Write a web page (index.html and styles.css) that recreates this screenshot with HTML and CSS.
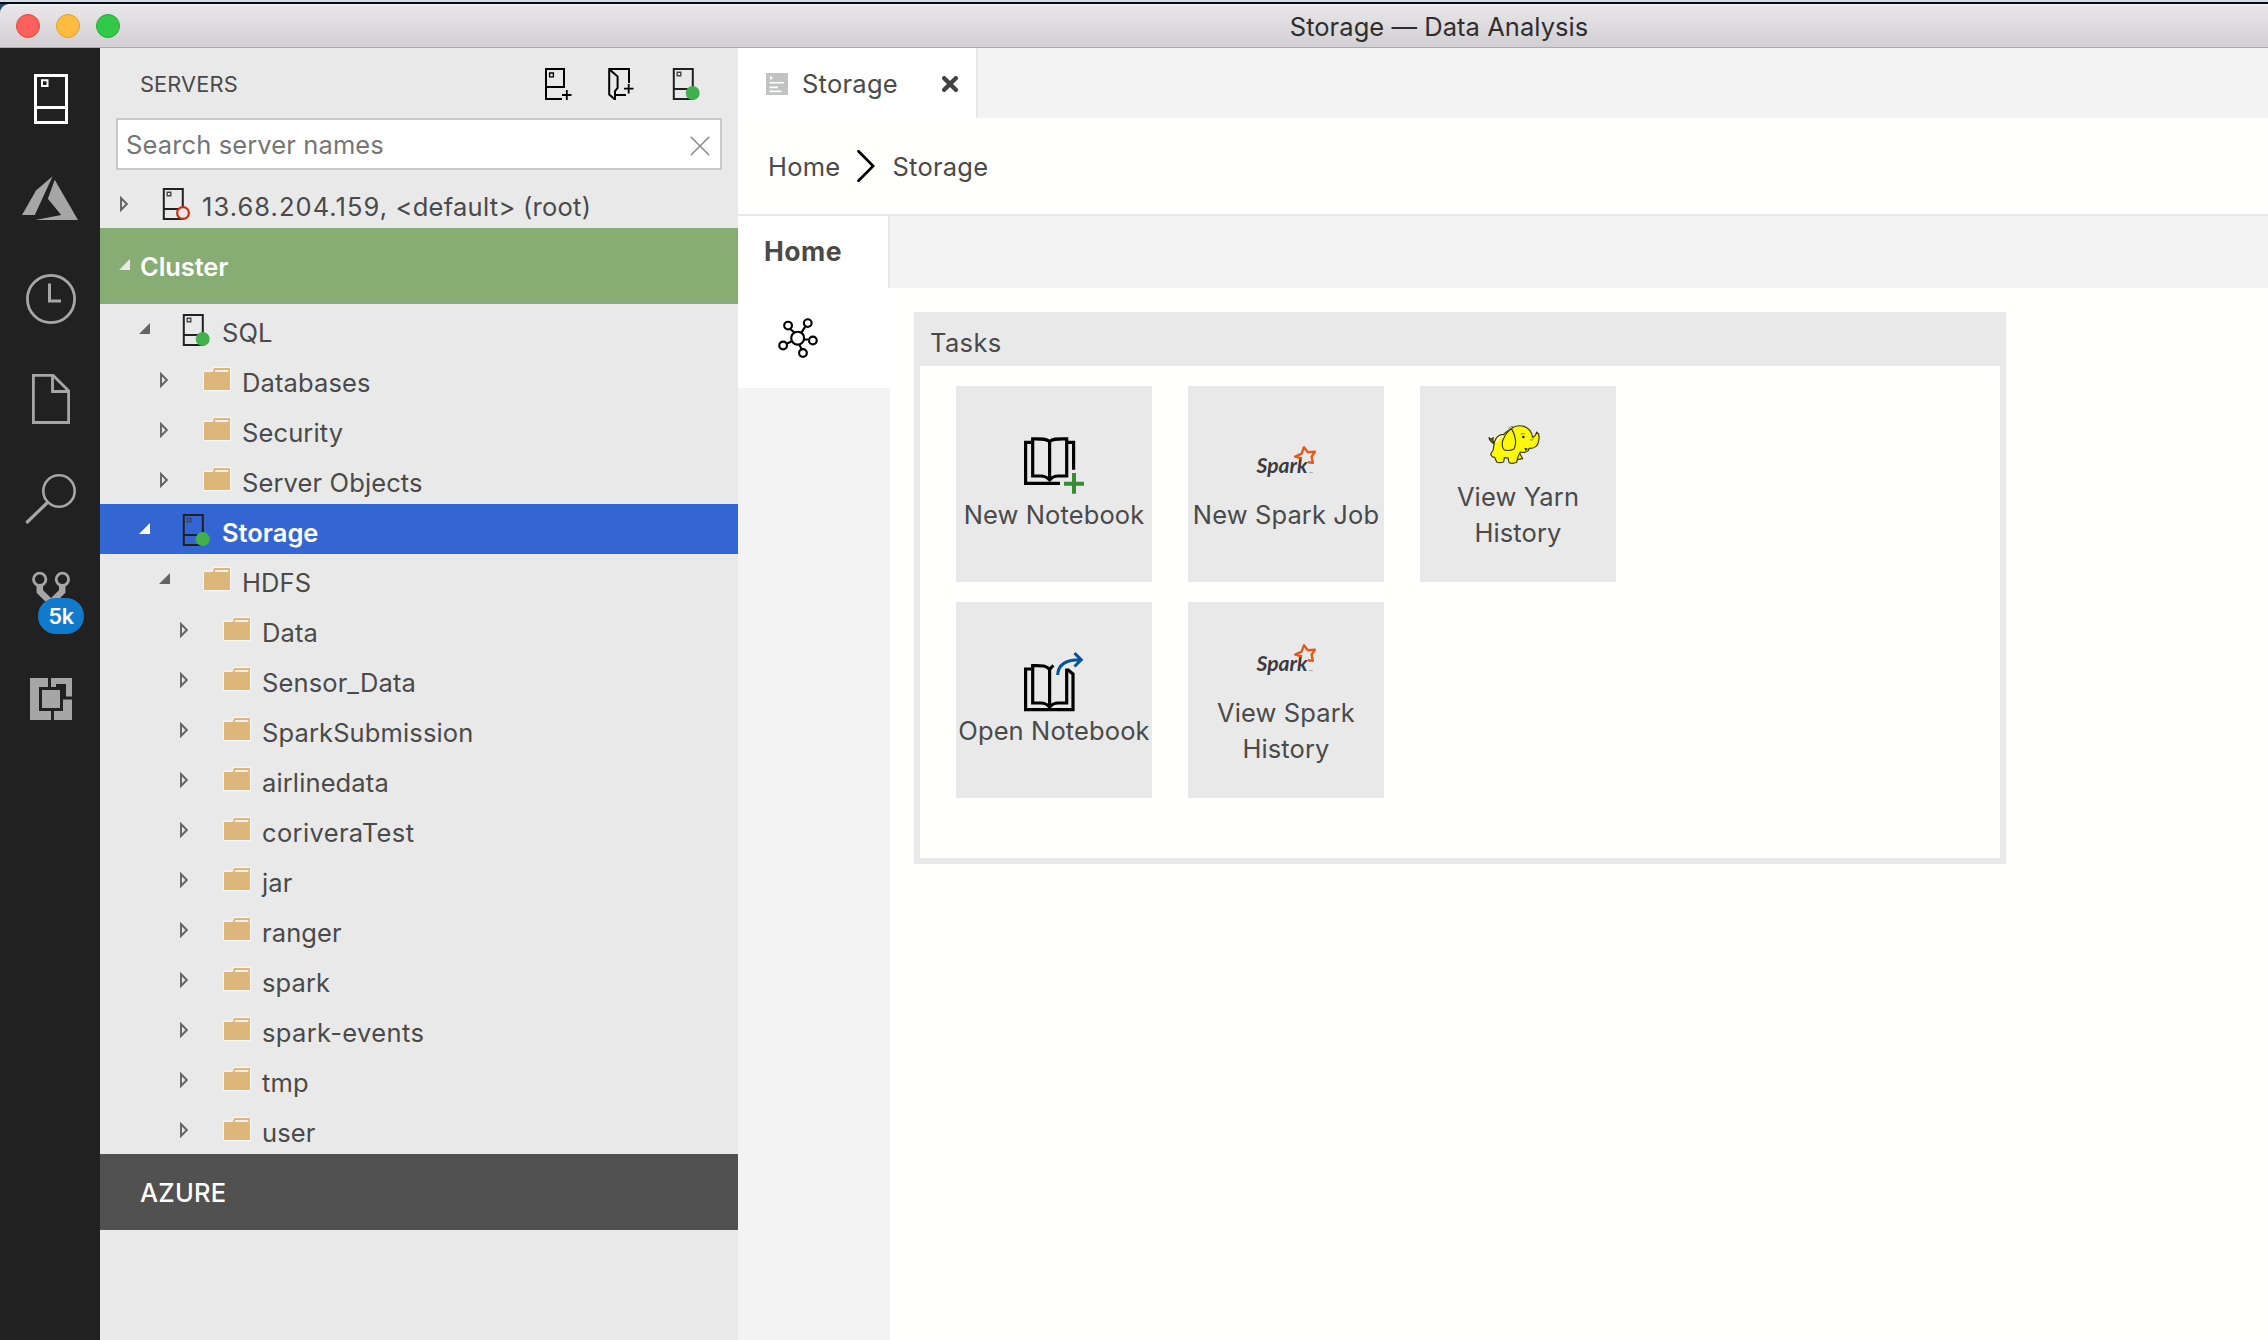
FILE: index.html
```html
<!DOCTYPE html>
<html lang="en">
<head>
<meta charset="utf-8">
<title>Storage — Data Analysis</title>
<link rel="stylesheet" href="styles.css">
</head>
<body>
<svg class="sprite" aria-hidden="true">
  <symbol id="collapsed" viewBox="0 0 8 16"><path d="M1 2V14L6.8 8Z" fill="none" stroke="#646465" stroke-width="1.9"/></symbol>
  <symbol id="expanded" viewBox="0 0 11 11"><path d="M11 0V11H0Z" fill="currentColor"/></symbol>
  <symbol id="server" viewBox="0 0 30 32"><path d="M1.8 1H20.8V31H1.8ZM1.8 21H20.8" fill="none" stroke="#212121" stroke-width="2"/><path d="M5.2 4.2H8.8V7.8H5.2Z" fill="none" stroke="#444" stroke-width="1.4"/></symbol>
  <symbol id="folder" viewBox="0 0 30 26"><path d="M3 4.5H9.5L11.8 .8H27Q29 .8 29 2.8V23.5Q29 25.2 27 25.2H3Q1 25.2 1 23.5V6.5Q1 4.5 3 4.5Z" fill="#f6f6f6"/><path d="M2 6H10.5L12 2H28V24H2Z" fill="#dcb67a"/><path d="M12.6 6L13.4 4H26.3V6Z" fill="#f0eff1"/></symbol>
  <symbol id="spark" viewBox="0 0 60 60"><text x="0.5" y="37" class="spark-word" textLength="51" lengthAdjust="spacingAndGlyphs">Spark</text><path d="M51.8 26.3L56.9 26.9L55.6 20.6L59 15.8L51.8 16.2L48 11.3L45.6 17.6L39.2 20.6L45.6 22.4" fill="none" stroke="#e25a1c" stroke-width="2.4" stroke-linejoin="round"/><path d="M53.3 36.6H54.6M55.3 36.6H56.6" stroke="#777" stroke-width=".8"/></symbol>
</svg>

<header class="titlebar">
  <div class="lights"><i class="light close"></i><i class="light min"></i><i class="light max"></i></div>
  <span class="title">Storage — Data Analysis</span>
</header>

<div class="workbench">
  <nav class="activity">
    <svg viewBox="0 0 100 100"><path d="M35.5 27.5H66.5V74.5H35.5ZM35.5 59.5H66.5" fill="none" stroke="#fff" stroke-width="3"/><path d="M42 32.2H47.5V38H42Z" fill="none" stroke="#fff" stroke-width="2"/></svg>
    <svg viewBox="0 0 100 100"><path d="M52.6 28.3L36 42.6L22 67H34.8Z" fill="#a6a6a6"/><path d="M54.7 31.7L78 72H35.2L61.2 67L47.9 50.8Z" fill="#a6a6a6"/></svg>
    <svg viewBox="0 0 100 100"><circle cx="51" cy="51" r="23.6" fill="none" stroke="#a6a6a6" stroke-width="2.8"/><path d="M49.5 35.5V53H61" fill="none" stroke="#a6a6a6" stroke-width="3"/></svg>
    <svg viewBox="0 0 100 100"><path d="M33.4 27.4H53.2L68.6 42.8V74.5H33.4ZM52.5 27V43.5H68.6" fill="none" stroke="#a6a6a6" stroke-width="2.8"/></svg>
    <svg viewBox="0 0 100 100"><circle cx="59" cy="43" r="15.7" fill="none" stroke="#a6a6a6" stroke-width="2.6"/><path d="M27.3 74L47.5 54.5" stroke="#a6a6a6" stroke-width="3.2" stroke-linecap="round"/></svg>
    <div class="scm">
      <svg viewBox="0 0 100 100"><g fill="none" stroke="#a6a6a6"><path d="M39.8 38V43.5L51 54.5L62.2 43.5V38" stroke-width="6.5"/><g fill="#212121" stroke-width="2.8"><circle cx="39.7" cy="31.3" r="6.2"/><circle cx="62.4" cy="31.3" r="6.2"/></g></g></svg>
      <span class="badge">5k</span>
    </div>
    <svg viewBox="0 0 100 100"><path d="M30 30H72V72H30Z" fill="#a6a6a6"/><path d="M39 39H56V36H66V49H63V63H39Z" fill="#212121"/><path d="M48 30H51V40H48ZM62 51.5V48.5H72V51.5ZM51 62H54V72H51Z" fill="#212121"/><path d="M42 42H60V60H42Z" fill="#a6a6a6"/></svg>
  </nav>

  <aside class="sidebar">
    <div class="side-head">
      <h2>SERVERS</h2>
      <div class="actions">
        <svg viewBox="544 68 30 32"><path d="M562 99H546V69H564V88M546 87H564" fill="none" stroke="#000" stroke-width="2"/><path d="M549.6 73H553.4V76.8H549.6Z" fill="none" stroke="#000" stroke-width="1.3"/><path d="M566.8 90V100M562 95H571.5" stroke="#000" stroke-width="1.8"/></svg>
        <svg viewBox="608 68 30 32"><path d="M629 83V69H609.2V94.5L615 99.5V91L617.6 88V76.5L609.5 69.5M616 95H626" fill="none" stroke="#000" stroke-width="2"/><path d="M628.7 84V93.5M624 88.6H633.5" stroke="#000" stroke-width="1.8"/></svg>
        <svg viewBox="0 0 30 32"><use href="#server"/><circle cx="20.7" cy="25" r="7" fill="#42b04f"/></svg>
      </div>
    </div>
    <div class="search"><span>Search server names</span><svg viewBox="0 0 20 20"><path d="M.7 .7L19.3 19.3M19.3 .7L.7 19.3" stroke="#8e8e8e" stroke-width="1.6"/></svg></div>

    <div class="row l0"><span class="tw"><svg class="c"><use href="#collapsed"/></svg></span><svg class="srv" viewBox="0 0 30 32"><use href="#server"/><circle cx="21" cy="25" r="5.9" fill="#e9e9e9" stroke="#d02e14" stroke-width="2.2"/></svg><span class="label host"><span class="ip">13.68.204.159,</span> &lt;default&gt; (root)</span></div>
    <div class="group cluster"><svg class="e"><use href="#expanded"/></svg><span>Cluster</span></div>
    <div class="row l1"><span class="tw"><svg class="e"><use href="#expanded"/></svg></span><svg class="srv" viewBox="0 0 30 32"><use href="#server"/><circle cx="20.7" cy="25" r="7" fill="#42b04f"/></svg><span class="label">SQL</span></div>
    <div class="row l2"><span class="tw"><svg class="c"><use href="#collapsed"/></svg></span><svg class="fld"><use href="#folder"/></svg><span class="label">Databases</span></div>
    <div class="row l2"><span class="tw"><svg class="c"><use href="#collapsed"/></svg></span><svg class="fld"><use href="#folder"/></svg><span class="label">Security</span></div>
    <div class="row l2"><span class="tw"><svg class="c"><use href="#collapsed"/></svg></span><svg class="fld"><use href="#folder"/></svg><span class="label">Server Objects</span></div>
    <div class="row l1 selected"><span class="tw"><svg class="e"><use href="#expanded"/></svg></span><svg class="srv" viewBox="0 0 30 32"><use href="#server"/><circle cx="20.7" cy="25" r="7" fill="#42b04f"/></svg><span class="label">Storage</span></div>
    <div class="row l2"><span class="tw"><svg class="e"><use href="#expanded"/></svg></span><svg class="fld"><use href="#folder"/></svg><span class="label">HDFS</span></div>
    <div class="row l3"><span class="tw"><svg class="c"><use href="#collapsed"/></svg></span><svg class="fld"><use href="#folder"/></svg><span class="label">Data</span></div>
    <div class="row l3"><span class="tw"><svg class="c"><use href="#collapsed"/></svg></span><svg class="fld"><use href="#folder"/></svg><span class="label">Sensor_Data</span></div>
    <div class="row l3"><span class="tw"><svg class="c"><use href="#collapsed"/></svg></span><svg class="fld"><use href="#folder"/></svg><span class="label">SparkSubmission</span></div>
    <div class="row l3"><span class="tw"><svg class="c"><use href="#collapsed"/></svg></span><svg class="fld"><use href="#folder"/></svg><span class="label">airlinedata</span></div>
    <div class="row l3"><span class="tw"><svg class="c"><use href="#collapsed"/></svg></span><svg class="fld"><use href="#folder"/></svg><span class="label wide">coriveraTest</span></div>
    <div class="row l3"><span class="tw"><svg class="c"><use href="#collapsed"/></svg></span><svg class="fld"><use href="#folder"/></svg><span class="label">jar</span></div>
    <div class="row l3"><span class="tw"><svg class="c"><use href="#collapsed"/></svg></span><svg class="fld"><use href="#folder"/></svg><span class="label">ranger</span></div>
    <div class="row l3"><span class="tw"><svg class="c"><use href="#collapsed"/></svg></span><svg class="fld"><use href="#folder"/></svg><span class="label">spark</span></div>
    <div class="row l3"><span class="tw"><svg class="c"><use href="#collapsed"/></svg></span><svg class="fld"><use href="#folder"/></svg><span class="label wide">spark-events</span></div>
    <div class="row l3"><span class="tw"><svg class="c"><use href="#collapsed"/></svg></span><svg class="fld"><use href="#folder"/></svg><span class="label">tmp</span></div>
    <div class="row l3"><span class="tw"><svg class="c"><use href="#collapsed"/></svg></span><svg class="fld"><use href="#folder"/></svg><span class="label">user</span></div>
    <div class="group azure"><span>AZURE</span></div>
  </aside>

  <main class="editor">
    <div class="tabs">
      <div class="tab">
        <svg class="doc" viewBox="0 0 22 22"><path d="M0 0H22V22H0Z" fill="#c1c3c2"/><path d="M4 3L7 5L4 7ZM3.5 9H18V10.6H3.5ZM3.5 13.6H12V15.2H3.5ZM3.5 17.6H15.5V19.2H3.5Z" fill="#fff"/></svg>
        <span>Storage</span>
        <svg class="x" viewBox="0 0 16 16"><path d="M2.2 2.2L13.8 13.8M13.8 2.2L2.2 13.8" stroke="#424242" stroke-width="4.4" stroke-linecap="round"/></svg>
      </div>
    </div>
    <div class="crumbs"><span>Home</span><svg viewBox="0 0 18 32"><path d="M1.5 1.2L16.2 16L1.5 30.8" fill="none" stroke="#000" stroke-width="2.7" stroke-linecap="round"/></svg><span>Storage</span></div>
    <div class="dash">
      <div class="rail">
        <div class="home">Home</div>
        <div class="railicon"><svg viewBox="114 803 120 121"><g fill="none" stroke="#000" stroke-width="6.5"><path d="M163 847L150 836M184 847L196 829M193 868H207M178 884L185 897M154 874L141 880"/><circle cx="173" cy="864" r="19.5"/><circle cx="144" cy="826" r="11.7"/><circle cx="203.5" cy="818.5" r="11.7"/><circle cx="219" cy="871" r="11.7"/><circle cx="189" cy="909" r="11.7"/><circle cx="129" cy="886" r="11.7"/></g></svg></div>
      </div>
      <div class="pane">
        <div class="strip"></div>
        <section class="tasks">
          <h3>Tasks</h3>
          <div class="tiles">
            <div class="tile"><svg viewBox="0 0 60 60"><g fill="none" stroke="#000" stroke-width="3.2"><path d="M7 6.3H1.6V47.3H36M44 6.3H49.6V33.7"/><path d="M25.6 5.5C22 2.5 17 2.9 8.7 2.9V40H17Q22 40 25.6 44Q29 40 34 40H42.7V2.9C34 2.9 29 2.5 25.6 5.5V44"/></g><path d="M48 37H52V45.7H60V49.7H52V57.7H48V49.7H40V45.7H48Z" fill="#388a34"/></svg><span>New Notebook</span></div>
            <div class="tile"><svg viewBox="0 0 60 60"><use href="#spark"/></svg><span>New Spark Job</span></div>
            <div class="tile"><svg viewBox="594 144 180 180"><g fill="#fcf80c" stroke="#3a380c" stroke-width="3.5" stroke-linejoin="round"><path d="M612 222Q598 212 597 203Q603 211 610 203Q606 213 614 218Z" fill="#77742a"/><path d="M684 240L698 266L682 269L676 258Z"/><path d="M640 194C622 192 611 212 611 230C611 238 610 243 605 247C599 254 606 262 614 262L620 276Q630 280 641 276L643 263L655 264Q654 272 658 278Q668 283 680 277Q682 260 691 246Q706 250 715 242L717 235Q744 238 747 206Q749 192 740 186Q738 198 728 202Q725 178 702 169Q678 163 662 178Q646 186 640 194Z"/><path d="M664 176Q648 186 638 212Q634 230 642 239Q656 245 672 237Q680 220 675 202Q672 188 664 176Z"/></g><path d="M640 199Q626 202 620 216" fill="none" stroke="#fffed0" stroke-width="6"/><path d="M703 233L714 236L707 244Z" fill="#222"/><circle cx="700" cy="201" r="4" fill="#222"/><path d="M692 193Q698 188 704 192M732 205Q728 212 720 210M655 176Q662 168 670 169" fill="none" stroke="#444" stroke-width="2"/></svg><span>View Yarn History</span></div>
            <div class="tile"><svg viewBox="0 0 60 60"><g fill="none" stroke="#000" stroke-width="3.2"><path d="M7 17H1.6V57.7H49V22L43.5 17.5"/><path d="M29.5 13.5Q27.5 15 25.6 17.5C22 13 17 13.6 8.7 13.6V51H17Q22 51 25.6 55Q29 51 34 51H42.7V16.5M25.6 17V55"/></g><path d="M33.7 23C34 12 42 7.7 56 7.7M50.5 1.2L57.2 7.7L50.5 14.5" fill="none" stroke="#00539c" stroke-width="3"/></svg><span class="tight">Open Notebook</span></div>
            <div class="tile"><svg viewBox="0 0 60 60"><use href="#spark"/></svg><span>View Spark History</span></div>
          </div>
        </section>
      </div>
    </div>
  </main>
</div>
</body>
</html>
```
FILE: styles.css
```css
* { box-sizing: border-box; }
body {
  margin: 0;
  width: 2268px;
  height: 1340px;
  overflow: hidden;
  display: flex;
  flex-direction: column;
  font: 400 25.5px/36px Inter, "Liberation Sans", sans-serif;
  letter-spacing: .12px;
  color: #4a4a4a;
  background: linear-gradient(#d5dde8 0 2px, #060b16 2px 4px, #2d4a68 4px);
}
svg { display: block; flex: none; }
h2, h3 { margin: 0; font-weight: 400; }
.sprite { display: none; }

.titlebar {
  height: 44px;
  margin-top: 4px;
  flex: none;
  display: grid;
  grid-template-columns: 1fr auto 1fr;
  align-items: center;
  padding: 0 16px;
  border-radius: 9px 0 0 0;
  border-bottom: 1px solid #aca8ad;
  background: linear-gradient(#f6f5f7 0, #e8e6e9 2px, #d2cfd3);
}
.lights { display: flex; gap: 16px; }
.light { width: 24px; height: 24px; border-radius: 50%; border: 1px solid; }
.close { background: #fc605c; border-color: #df4744; }
.min { background: #fdbc40; border-color: #de9f34; }
.max { background: #34c84a; border-color: #27aa35; }
.title { color: #2f2d30; padding: 2px 0 0 610px; letter-spacing: .05px; }

.workbench { flex: 1; min-height: 0; display: flex; }

.activity { width: 100px; flex: none; background: #212121; }
.activity svg { width: 100px; height: 100px; }
.scm { position: relative; }
.badge {
  position: absolute;
  left: 38px;
  top: 50px;
  width: 46px;
  height: 36px;
  border-radius: 18px;
  background: #127acb;
  color: #fff;
  font-weight: 600;
  font-size: 21.5px;
  letter-spacing: -.3px;
  text-align: center;
}

.sidebar { width: 638px; flex: none; background: #e9e9e9; }
.side-head {
  height: 70px;
  display: flex;
  justify-content: space-between;
  padding: 18px 36px 0 40px;
}
.side-head h2 { font-size: 21.8px; }
.actions { display: flex; gap: 34px; padding-top: 2px; }
.actions svg { width: 30px; height: 32px; }
.search {
  height: 52px;
  margin: 0 16px 8px;
  border: 2px solid #c8c8c8;
  background: #fff;
  color: #767676;
  display: flex;
  justify-content: space-between;
  align-items: center;
  padding: 0 10px 0 8px;
}
.search span { padding-top: 1px; }
.search svg { width: 20px; height: 20px; margin-top: 4px; }

.row { height: 50px; display: flex; align-items: flex-start; }
.l0 { padding-left: 18px; }
.l1 { padding-left: 38px; }
.l2 { padding-left: 58px; }
.l3 { padding-left: 78px; }
.tw { width: 44px; flex: none; color: #646465; }
svg.c { width: 8px; height: 16px; margin: 18px 0 0 2px; }
svg.e { width: 11px; height: 11px; margin: 19px 0 0 1px; }
.srv { width: 30px; height: 32px; margin: 10px 10px 0 0; }
.fld { width: 30px; height: 26px; margin: 12px 10px 0 0; }
.label { line-height: 50px; padding-top: 4px; white-space: nowrap; }
.host { letter-spacing: .27px; }
.ip { letter-spacing: 1.05px; }
.wide { letter-spacing: .36px; }
.selected { background: #3366d2; color: #fff; }
.selected .tw { color: #fff; }
.selected .label { font-weight: 600; letter-spacing: 0; }
.group { height: 76px; display: flex; color: #fff; line-height: 77px; }
.cluster { background: #87ad75; padding-left: 18px; font-weight: 600; letter-spacing: -.1px; }
.cluster .e { margin: 31px 10px 0 1px; color: #e9e9e9; }
.azure { background: #515151; padding-left: 40px; font-weight: 500; letter-spacing: .25px; }

.editor { flex: 1; min-width: 0; display: flex; flex-direction: column; background: #fffffd; }
.tabs { height: 70px; flex: none; background: #f3f3f3; display: flex; }
.tab {
  width: 240px;
  background: #fff;
  border-right: 2px solid #e8e8e8;
  display: flex;
  align-items: center;
  padding: 2px 18px 0 28px;
}
.tab span { margin: 0 auto 0 14px; letter-spacing: .25px; }
.doc { width: 22px; height: 22px; }
.x { width: 16px; height: 16px; }
.crumbs {
  height: 98px;
  flex: none;
  border-bottom: 2px solid #e8e8e8;
  display: flex;
  align-items: center;
  padding: 0 0 0 30px;
  letter-spacing: .25px;
}
.crumbs span { padding-top: 2px; }
.crumbs svg { width: 18px; height: 32px; margin: 0 17px; }
.dash { flex: 1; display: flex; }
.rail { width: 152px; flex: none; background: #f3f3f3; }
.home {
  height: 72px;
  background: #fff;
  border-right: 2px solid #e8e8e8;
  padding-left: 26px;
  font-size: 26.5px;
  font-weight: 700;
  letter-spacing: .5px;
  line-height: 71px;
}
.railicon { height: 100px; background: #fff; padding: 30px 0 0 40px; }
.railicon svg { width: 40px; height: 40px; }
.pane { flex: 1; }
.strip { height: 72px; background: #f3f3f3; }
.tasks {
  width: 1092px;
  height: 552px;
  margin: 24px 0 0 24px;
  border: 6px solid #e9e9e9;
  border-top: 0;
}
.tasks h3 { height: 54px; background: #e9e9e9; padding-left: 10px; font-size: inherit; line-height: 61px; letter-spacing: .35px; }
.tiles {
  display: grid;
  grid-template-columns: repeat(3, 196px);
  grid-auto-rows: 196px;
  gap: 20px 36px;
  padding: 20px 36px;
}
.tile {
  background: #e9e9e9;
  display: flex;
  flex-direction: column;
  align-items: center;
  justify-content: center;
  text-align: center;
}
.tile svg { width: 60px; height: 60px; }
.tile span { margin: 1px 0 -1px; }
.spark-word { font: italic 700 20px Lato, sans-serif; letter-spacing: 0; fill: #3c3a3e; }
```
